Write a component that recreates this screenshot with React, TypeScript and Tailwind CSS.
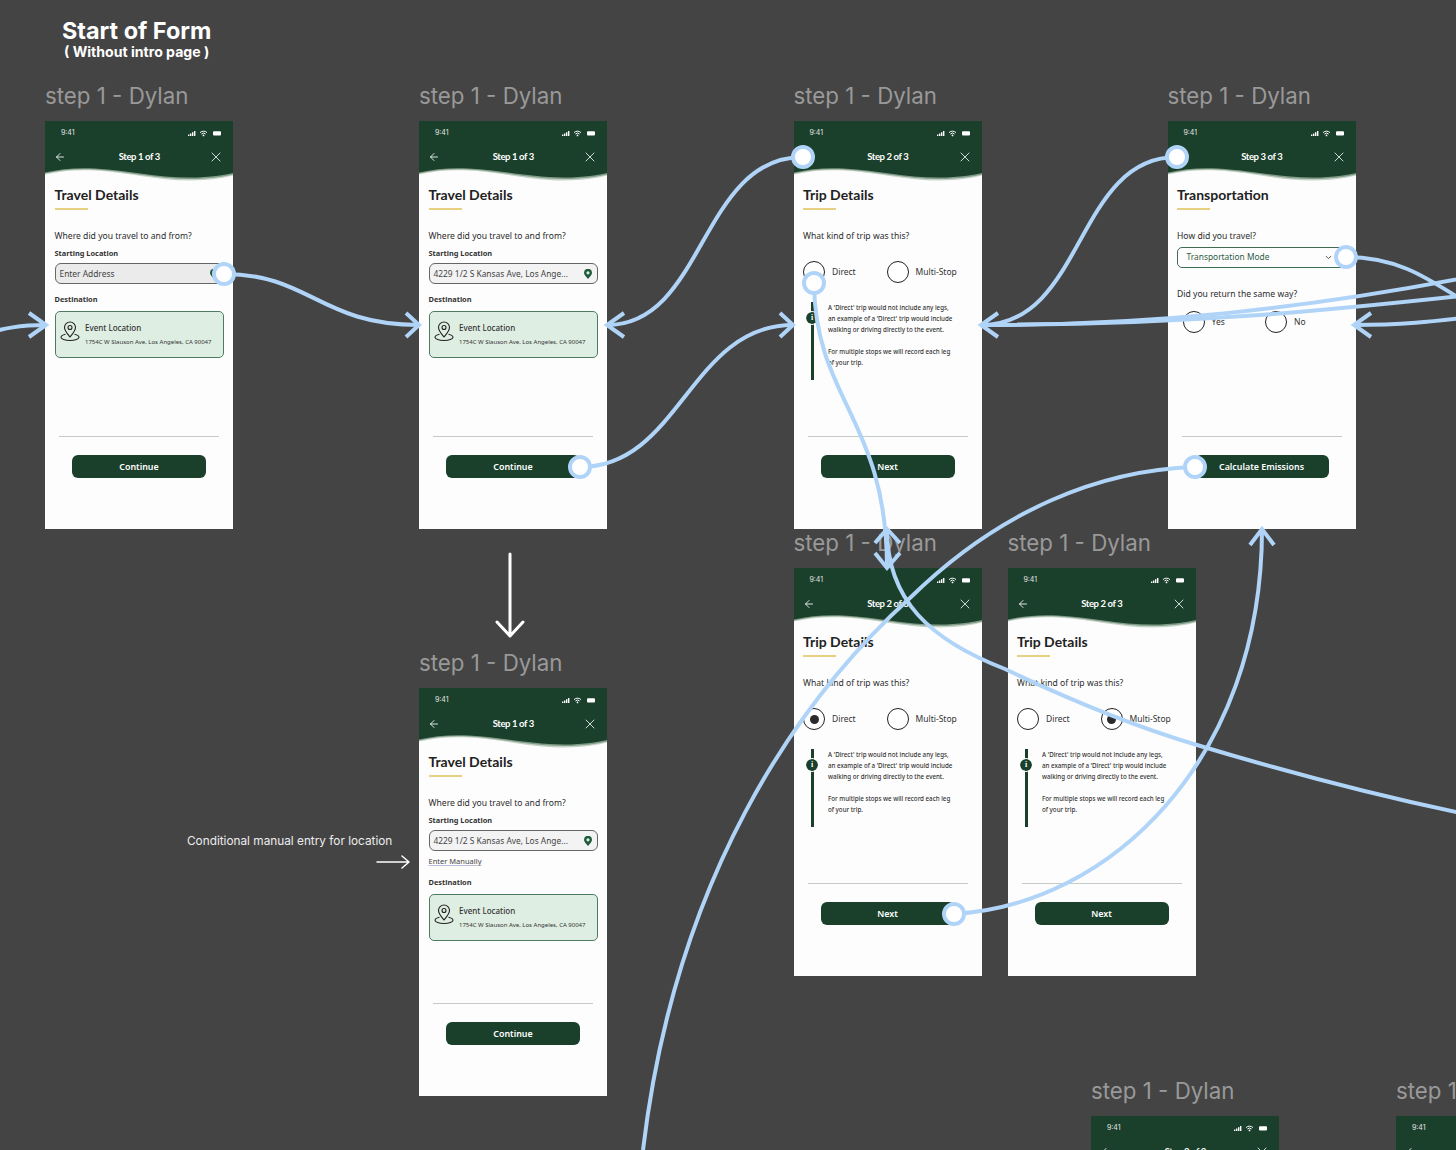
import type { ReactNode } from 'react'
import { ArrowLeft, ChevronDown, X } from 'lucide-react'

const noto = "font-['Noto_Sans',sans-serif]"
const lato = "font-['Lato',sans-serif]"

function StatusIcons() {
  return (
    <svg width="34" height="7" viewBox="0 0 34 7" fill="white">
      <rect x="0" y="4.5" width="1.4" height="1.5" />
      <rect x="2" y="3.5" width="1.4" height="2.5" />
      <rect x="4" y="2.2" width="1.4" height="3.8" />
      <rect x="6" y="1" width="1.4" height="5" />
      <path d="M12 2.6a5 5 0 0 1 7 0M13.4 4a3 3 0 0 1 4.2 0" fill="none" stroke="white" strokeWidth="1" />
      <circle cx="15.5" cy="5.4" r="0.9" />
      <rect x="25" y="1.2" width="8" height="4.4" rx="1" />
    </svg>
  )
}

function Wave() {
  return (
    <svg className="block w-full h-[13px] shrink-0" viewBox="0 0 188 13" preserveAspectRatio="none">
      <path d="M0 6.5C16 2.500 34 1.500 50 2.500C85 4.500 110 12.500 145 12.500C165 12.500 180 9.500 188 7.500V0H0Z" fill="#c4d1c7" />
      <path d="M0 5.500C16 1.500 34 .5 50 1.500C85 3.500 110 11 145 11C165 11 180 8.500 188 6.500V0H0Z" fill="#7f9a85" />
      <path d="M0 4.500C16 .5 34 -.5 50 .5C85 2.500 110 9.500 145 9.500C165 9.500 180 7 188 5V0H0Z" fill="#1a3f2b" />
    </svg>
  )
}

function Pin() {
  return (
    <svg width="20" height="21" viewBox="0 0 20 21" fill="none" stroke="#222" strokeWidth="1.1" className="shrink-0">
      <path d="M10 16c-3-3.600-5.500-6.300-5.500-9.500a5.500 5.500 0 0 1 11 0C15.500 9.700 13 12.400 10 16Z" />
      <circle cx="10" cy="6.500" r="2" />
      <path d="M5.500 13.200C2.800 13.800 1 14.900 1 16.200C1 18 5 19.500 10 19.500S19 18 19 16.200C19 14.900 17.200 13.800 14.500 13.200" />
    </svg>
  )
}

function GreenPin() {
  return (
    <svg width="8" height="10" viewBox="0 0 8 10" className="shrink-0">
      <path d="M4 10C2 7.800 0 6 0 3.800a4 4 0 0 1 8 0C8 6 6 7.800 4 10Z" fill="#1f5a3c" />
      <circle cx="4" cy="3.800" r="1.600" fill="#dfeee3" />
    </svg>
  )
}

function Footer({ label }: { label: string }) {
  return (
    <div className="mt-auto pb-[51px] flex flex-col items-center">
      <div className="w-[160px] h-px bg-[#c5cbc7]" />
      <div className={`mt-[18px] w-[134px] h-[23px] rounded-[6px] bg-[#1a3f2b] flex items-center justify-center text-white text-[8.900px] font-semibold ${noto}`}>
        {label}
      </div>
    </div>
  )
}

function Heading({ title }: { title: string }) {
  return (
    <>
      <div className={`mt-[5px] h-[18px] leading-[18px] text-[14px] font-bold text-[#222] ${lato}`}>{title}</div>
      <div className="mt-[4px] w-[33px] h-[1.500px] bg-[#e8d083]" />
    </>
  )
}

function Question({ children, className }: { children: ReactNode; className: string }) {
  return <div className={`h-[14px] leading-[14px] text-[8.600px] text-[#2c2c2c] ${noto} ${className}`}>{children}</div>
}

function Label({ children, className }: { children: ReactNode; className: string }) {
  return <div className={`h-[12px] leading-[12px] text-[7.400px] font-bold text-[#333] ${noto} ${className}`}>{children}</div>
}

function EventCard({ className }: { className: string }) {
  return (
    <div className={`h-[47px] w-[169px] rounded-[5px] bg-[#dfeee3] border border-[#4f7a63] flex items-start pl-[4.500px] pt-[9px] gap-[5px] ${noto} ${className}`}>
      <Pin />
      <div>
        <div className="h-[14px] leading-[14px] text-[8px] font-medium text-[#333]">Event Location</div>
        <div className="mt-[1px] leading-[12px] text-[6px] text-[#333] whitespace-nowrap">1754C W Slauson Ave, Los Angeles, CA 90047</div>
      </div>
    </div>
  )
}

function Radio({ label, checked, className }: { label: string; checked?: boolean; className: string }) {
  return (
    <div className={`flex items-center gap-[7px] ${className}`}>
      <div className="w-[22px] h-[22px] rounded-full border border-[#222] bg-white flex items-center justify-center shrink-0">
        {checked && <div className="w-[9px] h-[9px] rounded-full bg-[#2b2b2b]" />}
      </div>
      <span className={`pt-[1px] text-[8.500px] text-[#333] ${noto}`}>{label}</span>
    </div>
  )
}

function Screen({ step, children }: { step: string; children: ReactNode }) {
  return (
    <div className="w-[188px] h-[408px] bg-[#fdfdfd] flex flex-col overflow-hidden">
      <div className="bg-[#1a3f2b] h-[47px] shrink-0">
        <div className="h-[23px] pt-[2px] pl-[16px] pr-[11px] flex items-center justify-between">
          <span className="text-[7px] text-[#e6e6e6] font-['Inter',sans-serif]">9:41</span>
          <StatusIcons />
        </div>
        <div className="h-[26px] pl-[9px] pr-[8.500px] flex items-center justify-between text-white">
          <div className="w-[16px]">
            <ArrowLeft size={12} strokeWidth={1.7} />
          </div>
          <span className={`text-[9.500px] tracking-[-0.4px] font-bold ${lato}`}>{step}</span>
          <X size={16} strokeWidth={1.2} />
        </div>
      </div>
      <Wave />
      <div className="flex-1 flex flex-col px-[9.500px] min-h-0">{children}</div>
    </div>
  )
}

function AddressInput({ filled, className }: { filled: boolean; className?: string }) {
  return (
    <div className={`h-[21px] w-[169px] rounded-[6px] border border-[#666] flex items-center justify-between pl-[4px] pr-[5px] text-[8.400px] text-[#444] ${noto} ${filled ? 'bg-[#f3f3f3]' : 'bg-[#ebebeb]'} ${className ?? ''}`}>
      <span className="pt-[1px]">{filled ? '4229 1/2 S Kansas Ave, Los Ange...' : 'Enter Address'}</span>
      <GreenPin />
    </div>
  )
}

function TravelDetails({ filled, manual }: { filled: boolean; manual?: boolean }) {
  return (
    <Screen step="Step 1 of 3">
      <Heading title="Travel Details" />
      <Question className="mt-[19.500px]">Where did you travel to and from?</Question>
      <Label className="mt-[4px]">Starting Location</Label>
      <AddressInput filled={filled} className="mt-[4px]" />
      {manual && (
        <div className={`mt-[4px] h-[12px] leading-[12px] text-[7.500px] text-[#444] underline decoration-[#b9bfdc] ${noto}`}>Enter Manually</div>
      )}
      <Label className="mt-[9px]">Destination</Label>
      <EventCard className="mt-[5.500px]" />
      <Footer label="Continue" />
    </Screen>
  )
}

function TripDetails({ selected }: { selected?: 'direct' | 'multi' }) {
  return (
    <Screen step="Step 2 of 3">
      <Heading title="Trip Details" />
      <Question className="mt-[19.500px]">What kind of trip was this?</Question>
      <div className="mt-[18px] flex h-[22px]">
        <Radio label="Direct" checked={selected === 'direct'} className="w-[83.500px]" />
        <Radio label="Multi-Stop" checked={selected === 'multi'} className="" />
      </div>
      <div className="mt-[19px] flex h-[78px]">
        <div className="relative w-[25px] shrink-0 pl-[7.500px]">
          <div className="w-[3.500px] h-full bg-[#1a3f2b]" />
          <div className="absolute left-[3px] top-[10px] w-[12px] h-[12px] rounded-full bg-[#1a3f2b] outline outline-white flex items-center justify-center text-white text-[8px] font-bold leading-none font-['Liberation_Serif',serif]">i</div>
        </div>
        <div className={`text-[6.200px] leading-[11px] text-[#333] font-medium whitespace-nowrap ${noto}`}>
          <div>A 'Direct' trip would not include any legs,</div>
          <div>an example of a 'Direct' trip would include</div>
          <div>walking or driving directly to the event.</div>
          <div className="mt-[11px]">For multiple stops we will record each leg</div>
          <div>of your trip.</div>
        </div>
      </div>
      <Footer label="Next" />
    </Screen>
  )
}

function Transportation() {
  return (
    <Screen step="Step 3 of 3">
      <Heading title="Transportation" />
      <Question className="mt-[19.500px]">How did you travel?</Question>
      <div className={`mt-[4px] h-[21px] w-[169px] rounded-[5px] border border-[#3f6a53] flex items-center justify-between pl-[8.500px] pr-[12px] text-[8.400px] text-[#2f5c45] ${noto}`}>
        <span>Transportation Mode</span>
        <ChevronDown size={9} className="text-[#222]" />
      </div>
      <Question className="mt-[19px]">Did you return the same way?</Question>
      <div className="mt-[10px] flex h-[22px] pl-[5.500px]">
        <Radio label="Yes" className="w-[82.500px]" />
        <Radio label="No" className="" />
      </div>
      <Footer label="Calculate Emissions" />
    </Screen>
  )
}

function Placed({ className, children }: { className: string; children: ReactNode }) {
  return (
    <div className={`absolute ${className}`}>
      <div className="h-[30px] leading-[30px] mb-[10px] text-[22.300px] text-[#999999] whitespace-nowrap font-['Inter',sans-serif]">step 1 - Dylan</div>
      {children}
    </div>
  )
}

const lines = [
  'M224 274C310 274 320 325 419 325',
  'M-20 335C5 328 20 325 46 325',
  'M803 157C700 157 705 325 607 325',
  'M580 467C680 467 690 325 793 325',
  'M1177 157C1075 157 1085 325 981 325',
  'M981 325C1150 325 1300 310 1480 275',
  'M981 325C1200 325 1350 308 1480 294',
  'M1354 325C1400 325 1430 322 1480 316',
  'M1346 257C1400 257 1430 280 1470 305',
  'M814 283C815 400 887 420 887 568',
  'M887 529C887 600 930 640 1005 669C1070 700 1140 728 1197 745C1290 773 1380 797 1480 817',
  'M1195 467C1100 470 1000 510 911 597C795 702 675 880 643 1150',
  'M954 914C1110 905 1262 760 1262 529',
]

const arrows = [
  'M406 313L419 325L406 337',
  'M29 313L46 325L29 337',
  'M624 313L607 325L624 337',
  'M780 313L793 325L780 337',
  'M998 313L981 325L998 337',
  'M1371 313L1354 325L1371 337',
  'M875 553L887 568L900 553',
  'M875 543L887 529L900 543',
  'M1250 545L1262 529L1274 545',
]

const dots = [
  [224, 274],
  [803, 157],
  [1177, 157],
  [1346, 257],
  [814, 283],
  [580, 467],
  [1195, 467],
  [954, 914],
]

function Connectors() {
  return (
    <svg className="absolute left-0 top-0" width="1456" height="1150" viewBox="0 0 1456 1150" fill="none">
      <g stroke="#b0d4f8" strokeWidth="4">
        {lines.map((d) => <path key={d} d={d} />)}
        {arrows.map((d) => <path key={d} d={d} />)}
        {dots.map(([x, y]) => <circle key={`${x}-${y}`} cx={x} cy={y} r="10" fill="white" />)}
      </g>
      <g stroke="white" strokeLinecap="round" strokeLinejoin="round">
        <path d="M510 554V636M497 622L510 636L523 622" strokeWidth="3" />
        <path d="M377 862H409M402 856L409 862L402 868" strokeWidth="1.500" />
      </g>
    </svg>
  )
}

export default function App() {
  return (
    <div className="relative w-[1456px] h-[1150px] overflow-hidden bg-[#444444]">
      <div className="absolute left-[62px] top-[16px] text-white font-['Inter',sans-serif]">
        <div className="text-[23.400px] leading-[30px] font-bold whitespace-nowrap">Start of Form</div>
        <div className="text-[14.100px] leading-[12px] font-bold ml-[2px] whitespace-nowrap">( Without intro page )</div>
      </div>
      <div className="absolute left-[187px] top-[832px] text-[11.800px] leading-[18px] text-[#ededed] whitespace-nowrap font-['Inter',sans-serif]">
        Conditional manual entry for location
      </div>

      <Placed className="left-[45px] top-[81px]"><TravelDetails filled={false} /></Placed>
      <Placed className="left-[419px] top-[81px]"><TravelDetails filled /></Placed>
      <Placed className="left-[793.500px] top-[81px]"><TripDetails /></Placed>
      <Placed className="left-[1167.500px] top-[81px]"><Transportation /></Placed>
      <Placed className="left-[419px] top-[648px]"><TravelDetails filled manual /></Placed>
      <Placed className="left-[793.500px] top-[528px]"><TripDetails selected="direct" /></Placed>
      <Placed className="left-[1007.500px] top-[528px]"><TripDetails selected="multi" /></Placed>
      <Placed className="left-[1091px] top-[1076px]"><TripDetails selected="direct" /></Placed>
      <Placed className="left-[1396px] top-[1076px]"><TripDetails selected="multi" /></Placed>

      <Connectors />
    </div>
  )
}
